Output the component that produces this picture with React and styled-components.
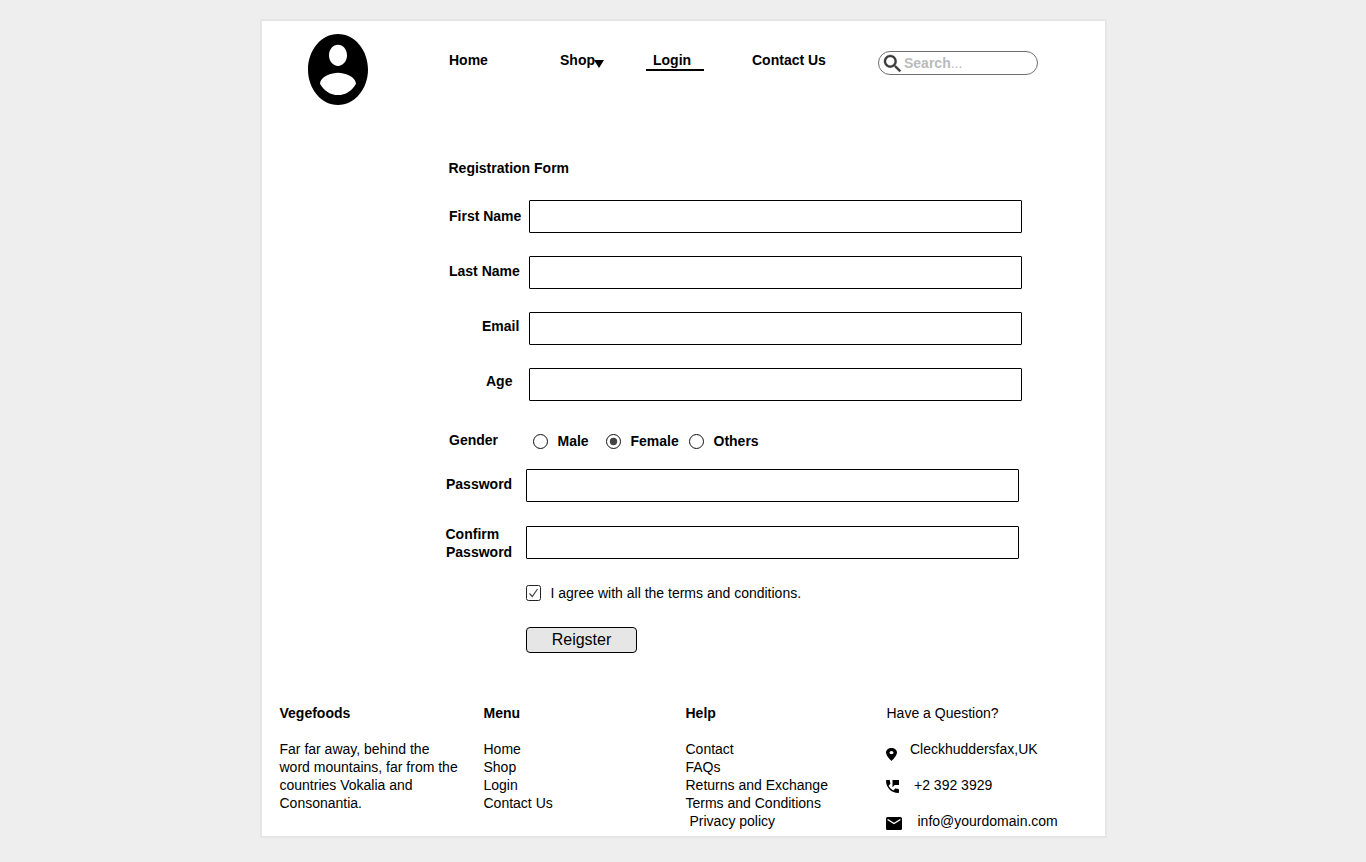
import React from "react";
import styled, { createGlobalStyle } from "styled-components";

const GlobalStyle = createGlobalStyle`
  * { box-sizing: border-box; }
  body {
    margin: 0;
    background: #eeeeee;
    color: #000;
    font: 14px/18px "Liberation Sans", Arial, sans-serif;
  }
`;

const Page = styled.div`
  display: flex;
  justify-content: center;
  height: 862px;
  padding: 19px 0 0 1px;
`;

const Card = styled.main`
  width: 847px;
  height: 819px;
  background: #fff;
  border: 2px solid #e5e5e5;
`;

const Header = styled.header`
  display: flex;
  align-items: flex-start;
  height: 138px;
  padding: 13px 0 0 46px;
`;

const Logo = styled.svg`
  display: block;
  width: 60px;
  height: 71px;
`;

const Nav = styled.nav`
  display: grid;
  grid-template-columns: 111px 86px 106px 126px 160px;
  align-items: start;
  margin: 17px 0 0 81px;
  font-weight: bold;
`;

const NavLink = styled.a`
  display: flex;
  justify-self: start;
  height: 20px;
  padding: ${(p) => (p.$active ? "0 13px 0 7px" : "0")};
  border-bottom: ${(p) => (p.$active ? "2px solid #000" : "0")};
`;

const Caret = styled.svg`
  width: 10px;
  height: 8px;
  margin: 9px 0 0 -1px;
`;

const Search = styled.div`
  display: flex;
  align-items: flex-start;
  gap: 3px;
  width: 160px;
  height: 24px;
  padding: 2px 0 0 5px;
  border: 1px solid #6e6e6e;
  border-radius: 12px;
  color: #bbb;
`;

const SearchIcon = styled.svg`
  width: 17px;
  height: 17px;
  margin-top: 1px;
  fill: #3a3a3a;
  stroke: #3a3a3a;
  stroke-width: 0.4;
  overflow: visible;
`;

const Dots = styled.span`
  font-weight: normal;
`;

const Form = styled.form`
  height: 545px;
  padding-left: 184px;
`;

const Title = styled.h1`
  height: 41px;
  margin: 0 0 0 2.5px;
  font-size: 14px;
  line-height: 18px;
`;

const Field = styled.div`
  display: flex;
  align-items: flex-start;
  height: ${(p) => p.$height || 56}px;
  padding-left: ${(p) => p.$inset || 0}px;
`;

const Label = styled.label`
  flex: none;
  width: 80px;
  margin-top: ${(p) => p.$drop}px;
  padding-left: ${(p) => p.$indent || 0}px;
  text-indent: ${(p) => p.$shift || 0}px;
  font-weight: bold;
`;

const Input = styled.input`
  width: 493px;
  height: 33px;
  padding: 0 8px;
  background: #fff;
  border: 1px solid #000;
  border-radius: 1px;
  font: inherit;
  outline: none;
`;

const Option = styled.label`
  display: flex;
  gap: 9.5px;
  width: ${(p) => p.$width}px;
  font-weight: bold;
`;

const Radio = styled.svg`
  flex: none;
  width: 15px;
  height: 15px;
  margin-top: 2px;
  fill: none;
`;

const Options = styled.div`
  display: flex;
  padding: 1px 0 0 4px;
`;

const Terms = styled.label`
  display: flex;
  gap: 9.5px;
  height: 43px;
  padding-left: 80px;
`;

const Check = styled.svg`
  flex: none;
  width: 15px;
  height: 16px;
  margin-top: 1px;
  fill: none;
`;

const Register = styled.button`
  display: block;
  width: 111px;
  height: 26px;
  margin-left: 80px;
  padding: 0;
  background: #e6e6e6;
  border: 1px solid #000;
  border-radius: 4px;
  color: #000;
  font: 16px/18px "Liberation Sans", Arial, sans-serif;
`;

const Footer = styled.footer`
  display: grid;
  grid-template-columns: 204px 202px 201px 200px;
  padding-left: 17.5px;
`;

const Heading = styled.h2`
  margin: 0 0 18px;
  font-size: 14px;
  line-height: 18px;
  font-weight: ${(p) => (p.$plain ? "normal" : "bold")};
`;

const Blurb = styled.p`
  width: 184px;
  margin: 0;
`;

const List = styled.ul`
  margin: 0;
  padding: 0;
  list-style: none;
`;

const Item = styled.li`
  padding-left: ${(p) => p.$indent || 0}px;
`;

const Contact = styled.li`
  display: flex;
  height: 36px;
  margin-left: -0.5px;
`;

const ContactIcon = styled.svg`
  flex: none;
  width: ${(p) => p.$w}px;
  height: 13px;
  margin: ${(p) => p.$top}px ${(p) => p.$gap}px 0 0;
`;

const names = [
  { label: "First Name", drop: 7, indent: 0 },
  { label: "Last Name", drop: 6, indent: 0 },
  { label: "Email", drop: 5, indent: 33 },
  { label: "Age", drop: 4, indent: 37 },
];

const genders = [
  { label: "Male", width: 73 },
  { label: "Female", width: 83, checked: true },
  { label: "Others", width: 80 },
];

const contacts = [
  {
    text: "Cleckhuddersfax,UK", w: 11, top: 8, gap: 13, box: "5 2 14 20",
    d: "M12 2C8.13 2 5 5.13 5 9c0 5.25 7 13 7 13s7-7.75 7-13c0-3.87-3.13-7-7-7zm0 9.5c-1.38 0-2.5-1.12-2.5-2.5s1.12-2.5 2.5-2.5 2.5 1.12 2.5 2.5-1.12 2.5-2.5 2.5z",
  },
  {
    text: "+2 392 3929", w: 13, top: 4, gap: 15, box: "3 3 18 18",
    d: "M20 15.5c-1.25 0-2.45-.2-3.57-.57-.35-.11-.74-.03-1.02.24l-2.2 2.2c-2.83-1.44-5.15-3.75-6.59-6.58l2.2-2.21c.28-.27.36-.66.25-1.01C8.7 6.45 8.5 5.25 8.5 4c0-.55-.45-1-1-1H4c-.55 0-1 .45-1 1 0 9.39 7.61 17 17 17 .55 0 1-.45 1-1v-3.5c0-.55-.45-1-1-1zM12 3v10l3-3h6V3h-9z",
  },
  {
    text: "info@yourdomain.com", w: 16, top: 5, gap: 15.5, box: "2 4 20 16",
    d: "M20 4H4c-1.1 0-1.99.9-1.99 2L2 18c0 1.1.9 2 2 2h16c1.1 0 2-.9 2-2V6c0-1.1-.9-2-2-2zm0 4l-8 5-8-5V6l8 5 8-5v2z",
  },
];

export default function App() {
  return (
    <Page>
      <GlobalStyle />
      <Card>
        <Header>
          <Logo viewBox="2 2 20 20" preserveAspectRatio="none">
            <path d="M12 2C6.48 2 2 6.48 2 12s4.48 10 10 10 10-4.48 10-10S17.52 2 12 2zm0 3c1.66 0 3 1.34 3 3s-1.34 3-3 3-3-1.34-3-3 1.34-3 3-3zm0 14.2c-2.5 0-4.71-1.28-6-3.22.03-1.99 4-3.08 6-3.08 1.99 0 5.97 1.09 6 3.08-1.29 1.94-3.5 3.22-6 3.22z" />
          </Logo>
          <Nav>
            <NavLink>Home</NavLink>
            <NavLink>
              Shop
              <Caret viewBox="0 0 10 8"><path d="M0 0h10L5 8z" /></Caret>
            </NavLink>
            <NavLink $active>Login</NavLink>
            <NavLink>Contact Us</NavLink>
            <Search>
              <SearchIcon viewBox="3 3 17.5 17.5">
                <path d="M15.5 14h-.79l-.28-.27C15.41 12.59 16 11.11 16 9.5 16 5.91 13.09 3 9.5 3S3 5.91 3 9.5 5.91 16 9.5 16c1.61 0 3.09-.59 4.23-1.57l.27.28v.79l5 4.99L20.49 19l-4.99-5zm-6 0C7.01 14 5 11.99 5 9.5S7.01 5 9.5 5 14 7.01 14 9.5 11.99 14 9.5 14z" />
              </SearchIcon>
              <span>Search<Dots>...</Dots></span>
            </Search>
          </Nav>
        </Header>

        <Form>
          <Title>Registration Form</Title>
          {names.map((f, i) => (
            <Field key={f.label} $inset={3} $height={i === 3 ? 63 : 56}>
              <Label $drop={f.drop} $indent={f.indent}>{f.label}</Label>
              <Input />
            </Field>
          ))}
          <Field $inset={3} $height={38}>
            <Label $drop={0}>Gender</Label>
            <Options>
              {genders.map((g) => (
                <Option key={g.label} $width={g.width}>
                  <Radio viewBox="0 0 15 15">
                    <circle cx="7.5" cy="7.5" r="7" stroke="#111" />
                    {g.checked && <circle cx="7.5" cy="7.5" r="3.7" fill="#444" />}
                  </Radio>
                  {g.label}
                </Option>
              ))}
            </Options>
          </Field>
          <Field $height={57}>
            <Label $drop={6}>Password</Label>
            <Input />
          </Field>
          <Field $height={58}>
            <Label $drop={-1} $shift={-0.5}>Confirm<br />Password</Label>
            <Input />
          </Field>
          <Terms>
            <Check viewBox="0 0 15 16">
              <rect x=".5" y=".5" width="14" height="15" rx="2" stroke="#222" />
              <path d="M3.5 8.5l2.8 3L11.5 4" stroke="#444" strokeWidth="1.2" />
            </Check>
            I agree with all the terms and conditions.
          </Terms>
          <Register type="button">Reigster</Register>
        </Form>

        <Footer>
          <section>
            <Heading>Vegefoods</Heading>
            <Blurb>Far far away, behind the word mountains, far from the countries Vokalia and Consonantia.</Blurb>
          </section>
          <section>
            <Heading>Menu</Heading>
            <List>
              <Item>Home</Item>
              <Item>Shop</Item>
              <Item>Login</Item>
              <Item>Contact Us</Item>
            </List>
          </section>
          <section>
            <Heading>Help</Heading>
            <List>
              <Item>Contact</Item>
              <Item>FAQs</Item>
              <Item>Returns and Exchange</Item>
              <Item>Terms and Conditions</Item>
              <Item $indent={4}>Privacy policy</Item>
            </List>
          </section>
          <section>
            <Heading $plain>Have a Question?</Heading>
            <List>
              {contacts.map((c) => (
                <Contact key={c.text}>
                  <ContactIcon viewBox={c.box} preserveAspectRatio="none" $w={c.w} $top={c.top} $gap={c.gap}>
                    <path d={c.d} />
                  </ContactIcon>
                  {c.text}
                </Contact>
              ))}
            </List>
          </section>
        </Footer>
      </Card>
    </Page>
  );
}
